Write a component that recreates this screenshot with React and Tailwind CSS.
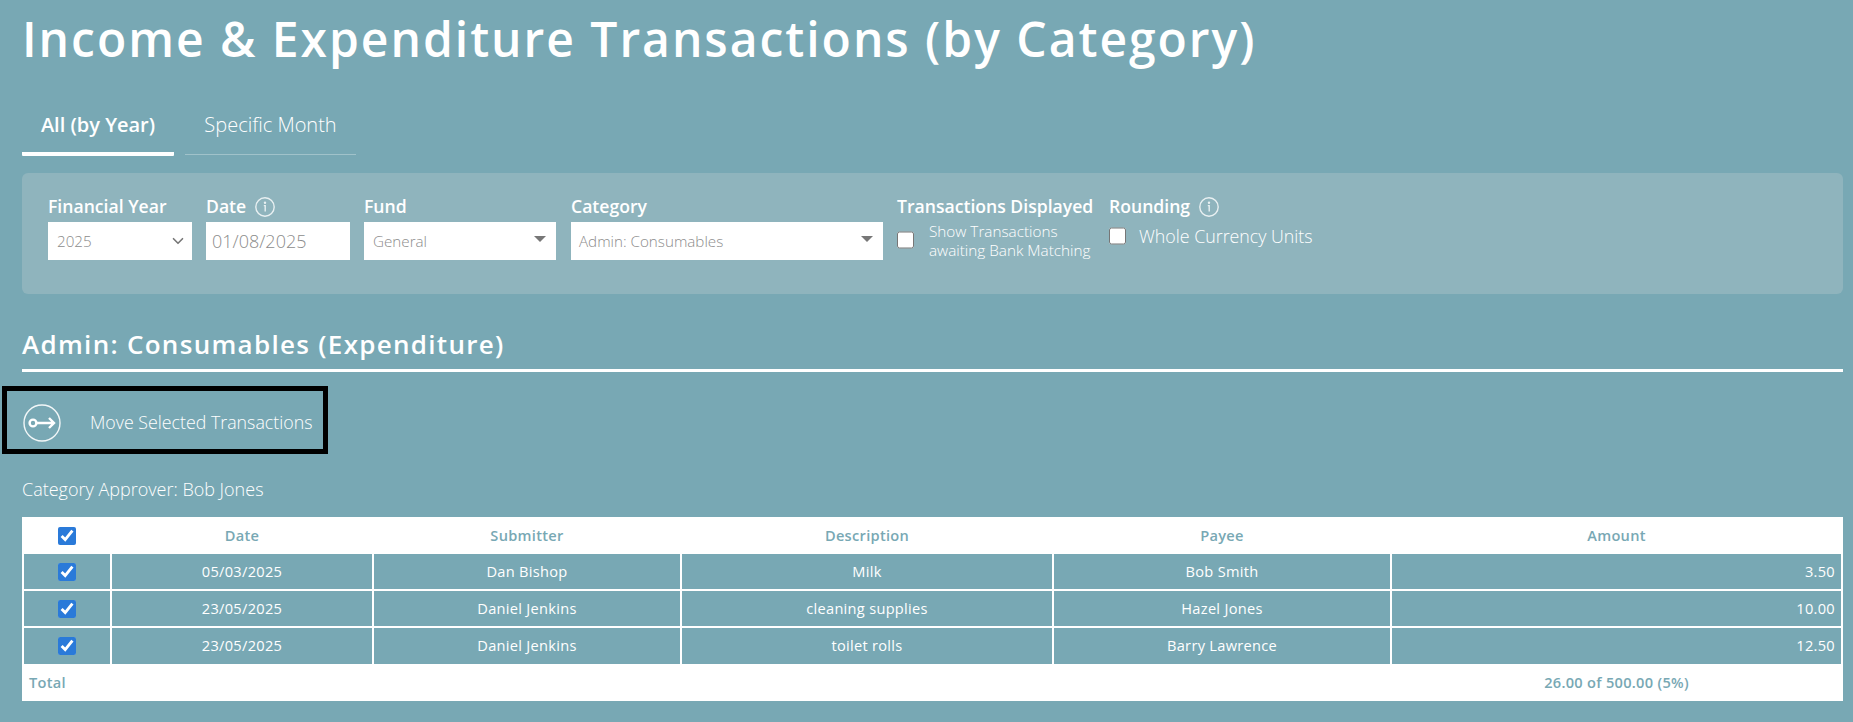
// App.jsx — Income & Expenditure transactions by category
import { ChevronDown } from "lucide-react";

const rows = [
  { date: "05/03/2025", submitter: "Dan Bishop", description: "Milk", payee: "Bob Smith", amount: "3.50", height: "h-[35px]" },
  { date: "23/05/2025", submitter: "Daniel Jenkins", description: "cleaning supplies", payee: "Hazel Jones", amount: "10.00", height: "h-[35px]" },
  { date: "23/05/2025", submitter: "Daniel Jenkins", description: "toilet rolls", payee: "Barry Lawrence", amount: "12.50", height: "h-[36px]" },
];

function InfoIcon() {
  return (
    <svg width="20" height="20" viewBox="0 0 20 20" fill="none" className="opacity-80">
      <circle cx="10" cy="10" r="9.2" stroke="white" strokeWidth="1.4" />
      <circle cx="10" cy="5.8" r="1.2" fill="white" />
      <path d="M8.8 8.6h1.4v6" stroke="white" strokeWidth="1.4" fill="none" />
    </svg>
  );
}

function Caret() {
  return <span className="border-x-[6px] border-t-[6px] border-x-transparent border-t-[#777] mb-1" />;
}

function Field({ label, icon, className, children }) {
  return (
    <div className={className}>
      <div className="flex items-center gap-[9px] h-[19px] mb-[6px] text-[17.6px] leading-[19px] font-semibold text-white whitespace-nowrap">
        {label}
        {icon && <InfoIcon />}
      </div>
      {children}
    </div>
  );
}

function Box({ text, pad = "pl-[9px] pr-[5px]", children }) {
  return (
    <div className={`flex items-center justify-between h-[38px] bg-white text-[#8c8c8c] text-[15.2px] font-light ${pad}`}>
      <span>{text}</span>
      {children}
    </div>
  );
}

function Tab({ active, className, children }) {
  return (
    <div
      className={`flex items-start justify-center pt-[19px] text-[20px] leading-[27px] text-white ${className} ${
        active ? "h-[64px] font-semibold border-b-4 border-white rounded-b-[1px]" : "h-[63px] font-light border-b border-white/30"
      }`}
    >
      {children}
    </div>
  );
}

export default function App() {
  return (
    <div className="min-h-screen bg-[#78a8b4] pl-[22px] pr-[10px] text-white font-['Open_Sans',sans-serif]">
      <h1 className="h-[92px] pt-[6px] text-[48px] leading-[66px] font-semibold tracking-[0.041em] whitespace-nowrap">
        Income &amp; Expenditure Transactions (by Category)
      </h1>

      {/* Tabs */}
      <div className="flex items-start gap-[11px]">
        <Tab active className="w-[152px]">All (by Year)</Tab>
        <Tab className="w-[171px]">Specific Month</Tab>
      </div>

      {/* Filters */}
      <div className="flex items-start mt-[17px] h-[121px] pt-[24px] pl-[26px] rounded-[6px] bg-[#8fb4bd]">
        <Field label="Financial Year" className="w-[144px] mr-[14px]">
          <Box text="2025">
            <ChevronDown size={18} strokeWidth={2.2} className="text-[#777]" />
          </Box>
        </Field>
        <Field label="Date" icon className="w-[144px] mr-[14px]">
          <input
            readOnly
            value="01/08/2025"
            className="block w-full h-[38px] pl-[6px] bg-white text-[#8c8c8c] text-[18px] font-light outline-none"
          />
        </Field>
        <Field label="Fund" className="w-[192px] mr-[15px]">
          <Box text="General" pad="pl-[9px] pr-[10px]">
            <Caret />
          </Box>
        </Field>
        <Field label="Category" className="w-[312px] mr-[14px]">
          <Box text="Admin: Consumables" pad="pl-[8px] pr-[10px]">
            <Caret />
          </Box>
        </Field>
        <Field label="Transactions Displayed" className="w-[195px] mr-[17px]">
          <div className="flex items-start">
            <input type="checkbox" className="w-[17px] h-[18px] mt-[9px] mr-[15px] shrink-0" />
            <span className="text-[15.3px] font-light leading-[19px] whitespace-nowrap">
              Show Transactions
              <br />
              awaiting Bank Matching
            </span>
          </div>
        </Field>
        <Field label="Rounding" icon className="w-[210px]">
          <div className="flex items-center mt-[11px]">
            <input type="checkbox" className="w-[17px] h-[18px] mr-[13px] shrink-0" />
            <span className="text-[17.8px] font-light leading-[18px] whitespace-nowrap">Whole Currency Units</span>
          </div>
        </Field>
      </div>

      {/* Category heading */}
      <h2 className="mt-[34px] h-[44px] pb-[9px] border-b-[3px] border-white text-[26px] leading-[32px] font-semibold tracking-[0.05em]">
        Admin: Consumables (Expenditure)
      </h2>

      <button
        type="button"
        className="flex items-center mt-[14px] -ml-[20px] w-[326px] h-[68px] pl-[16px] pt-[5px] border-[5px] border-black text-[17.8px] font-light text-white"
      >
        <svg width="38" height="38" viewBox="0 0 38 38" fill="none" className="shrink-0">
          <circle cx="19" cy="19" r="18" stroke="white" strokeWidth="1.4" opacity="0.9" />
          <circle cx="10" cy="19" r="3.4" stroke="white" strokeWidth="2.4" />
          <path d="M13.5 19H31M26 14l5 5-5 5" stroke="white" strokeWidth="2.4" />
        </svg>
        <span className="ml-[29px] whitespace-nowrap">Move Selected Transactions</span>
      </button>

      <p className="mt-[24px] h-[22px] text-[18px] font-light leading-[22px]">Category Approver: Bob Jones</p>

      {/* Transactions */}
      <table className="mt-[17px] w-full table-fixed border-separate border-spacing-[2px] bg-white text-[14.6px] tracking-[0.02em]">
        <colgroup>
          <col className="w-[86px]" />
          <col className="w-[260px]" />
          <col className="w-[306px]" />
          <col className="w-[370px]" />
          <col className="w-[336px]" />
          <col />
        </colgroup>
        <thead>
          <tr className="h-[33px] font-semibold text-[#78a8b4]">
            <th className="p-0">
              <input type="checkbox" defaultChecked className="block mx-auto w-[18px] h-[18px] accent-[#2a7ad9]" />
            </th>
            <th className="p-0 font-semibold">Date</th>
            <th className="p-0 font-semibold">Submitter</th>
            <th className="p-0 font-semibold">Description</th>
            <th className="p-0 font-semibold">Payee</th>
            <th className="p-0 font-semibold">Amount</th>
          </tr>
        </thead>
        <tbody>
          {rows.map((r, i) => (
            <tr key={i} className={r.height}>
              <td className="p-0 bg-[#78a8b4]">
                <input type="checkbox" defaultChecked className="block mx-auto w-[18px] h-[18px] accent-[#2a7ad9]" />
              </td>
              <td className="p-0 bg-[#78a8b4] text-center">{r.date}</td>
              <td className="p-0 bg-[#78a8b4] text-center">{r.submitter}</td>
              <td className="p-0 bg-[#78a8b4] text-center">{r.description}</td>
              <td className="p-0 bg-[#78a8b4] text-center">{r.payee}</td>
              <td className="p-0 pr-[6px] bg-[#78a8b4] text-right">{r.amount}</td>
            </tr>
          ))}
          <tr className="h-[33px] font-semibold text-[#78a8b4]">
            <td colSpan={5} className="p-0 pl-[5px]">Total</td>
            <td className="p-0 text-center">26.00 of 500.00 (5%)</td>
          </tr>
        </tbody>
      </table>
    </div>
  );
}
